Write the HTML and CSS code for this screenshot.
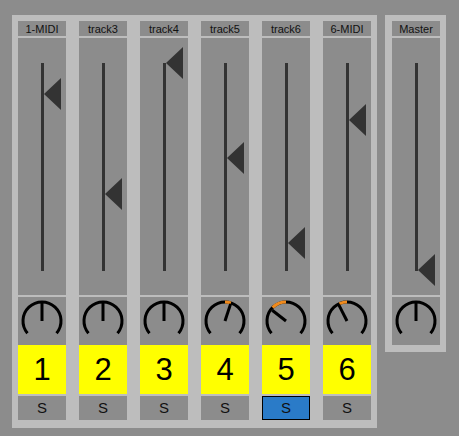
FILE: index.html
```html
<!DOCTYPE html>
<html>
<head>
<meta charset="utf-8">
<link rel="stylesheet" href="styles.css">
</head>
<body>
<div class="mixer">
  <div class="panel main">
    <div class="strip">
      <div class="name">1-MIDI</div>
      <svg class="fader" width="48" height="257"><rect x="23" y="25" width="3" height="208" fill="#333"/><polygon points="26,56 43,40 43,72" fill="#333"/></svg>
      <svg class="knob" width="48" height="48"><path d="M9.45 36.21 A19 19 0 1 1 38.55 36.21" fill="none" stroke="#000" stroke-width="3"/><line x1="24" y1="24" x2="24" y2="5.5" stroke="#000" stroke-width="3"/></svg>
      <div class="num">1</div>
      <div class="solo">S</div>
    </div>
    <div class="strip">
      <div class="name">track3</div>
      <svg class="fader" width="48" height="257"><rect x="23" y="25" width="3" height="208" fill="#333"/><polygon points="26,156 43,140 43,172" fill="#333"/></svg>
      <svg class="knob" width="48" height="48"><path d="M9.45 36.21 A19 19 0 1 1 38.55 36.21" fill="none" stroke="#000" stroke-width="3"/><line x1="24" y1="24" x2="24" y2="5.5" stroke="#000" stroke-width="3"/></svg>
      <div class="num">2</div>
      <div class="solo">S</div>
    </div>
    <div class="strip">
      <div class="name">track4</div>
      <svg class="fader" width="48" height="257"><rect x="23" y="25" width="3" height="208" fill="#333"/><polygon points="26,25 43,9 43,41" fill="#333"/></svg>
      <svg class="knob" width="48" height="48"><path d="M9.45 36.21 A19 19 0 1 1 38.55 36.21" fill="none" stroke="#000" stroke-width="3"/><line x1="24" y1="24" x2="24" y2="5.5" stroke="#000" stroke-width="3"/></svg>
      <div class="num">3</div>
      <div class="solo">S</div>
    </div>
    <div class="strip">
      <div class="name">track5</div>
      <svg class="fader" width="48" height="257"><rect x="23" y="25" width="3" height="208" fill="#333"/><polygon points="26,120 43,104 43,136" fill="#333"/></svg>
      <svg class="knob" width="48" height="48"><path d="M9.45 36.21 A19 19 0 1 1 38.55 36.21" fill="none" stroke="#000" stroke-width="3"/><path d="M24 5 A19 19 0 0 1 29.87 5.93" fill="none" stroke="#f08a1c" stroke-width="3"/><line x1="24" y1="24" x2="29.6" y2="6.9" stroke="#000" stroke-width="3"/></svg>
      <div class="num">4</div>
      <div class="solo">S</div>
    </div>
    <div class="strip">
      <div class="name">track6</div>
      <svg class="fader" width="48" height="257"><rect x="23" y="25" width="3" height="208" fill="#333"/><polygon points="26,205 43,189 43,221" fill="#333"/></svg>
      <svg class="knob" width="48" height="48"><path d="M9.45 36.21 A19 19 0 1 1 38.55 36.21" fill="none" stroke="#000" stroke-width="3"/><path d="M10.56 10.56 A19 19 0 0 1 24 5" fill="none" stroke="#f08a1c" stroke-width="3"/><line x1="24" y1="24" x2="10.2" y2="13.2" stroke="#000" stroke-width="3"/></svg>
      <div class="num">5</div>
      <div class="solo on">S</div>
    </div>
    <div class="strip">
      <div class="name">6-MIDI</div>
      <svg class="fader" width="48" height="257"><rect x="23" y="25" width="3" height="208" fill="#333"/><polygon points="26,82 43,66 43,98" fill="#333"/></svg>
      <svg class="knob" width="48" height="48"><path d="M9.45 36.21 A19 19 0 1 1 38.55 36.21" fill="none" stroke="#000" stroke-width="3"/><path d="M16.5 6.55 A19 19 0 0 1 24 5" fill="none" stroke="#f08a1c" stroke-width="3"/><line x1="24" y1="24" x2="15.8" y2="7.9" stroke="#000" stroke-width="3"/></svg>
      <div class="num">6</div>
      <div class="solo">S</div>
    </div>
  </div>
  <div class="panel master">
    <div class="strip">
      <div class="name">Master</div>
      <svg class="fader" width="48" height="257"><rect x="23" y="25" width="3" height="208" fill="#333"/><polygon points="26,232 43,216 43,248" fill="#333"/></svg>
      <svg class="knob" width="48" height="48"><path d="M9.45 36.21 A19 19 0 1 1 38.55 36.21" fill="none" stroke="#000" stroke-width="3"/><line x1="24" y1="24" x2="24" y2="5.5" stroke="#000" stroke-width="3"/></svg>
    </div>
  </div>
</div>
</body>
</html>
```

FILE: styles.css
```css
html, body {
  margin: 0;
  background: #8c8c8c;
  font-family: "Liberation Sans", Arial, sans-serif;
}
.mixer {
  display: flex;
  align-items: flex-start;
  gap: 8px;
  padding: 15px 0 0 12px;
}
.panel {
  background: #bdbdbd;
  display: flex;
  gap: 13px;
  padding: 6px 6px 8px 6px;
}
.panel.master {
  padding: 6px 6px 7px 7px;
}
.strip {
  width: 48px;
  display: flex;
  flex-direction: column;
}
.name {
  height: 15px;
  background: #8c8c8c;
  color: #111;
  font-size: 11px;
  line-height: 16px;
  text-align: center;
  white-space: nowrap;
}
.fader {
  display: block;
  margin-top: 2px;
  background: #8c8c8c;
}
.knob {
  display: block;
  margin-top: 2px;
  background: #8c8c8c;
}
.num {
  height: 49px;
  background: #ffff00;
  color: #000;
  font-size: 31px;
  display: flex;
  align-items: center;
  justify-content: center;
}
.solo {
  margin-top: 2px;
  height: 24px;
  box-sizing: border-box;
  background: #8c8c8c;
  color: #111;
  font-size: 15px;
  line-height: 24px;
  text-align: center;
}
.solo.on {
  background: #2a7bc8;
  border: 1px solid #000;
  line-height: 22px;
}
```
